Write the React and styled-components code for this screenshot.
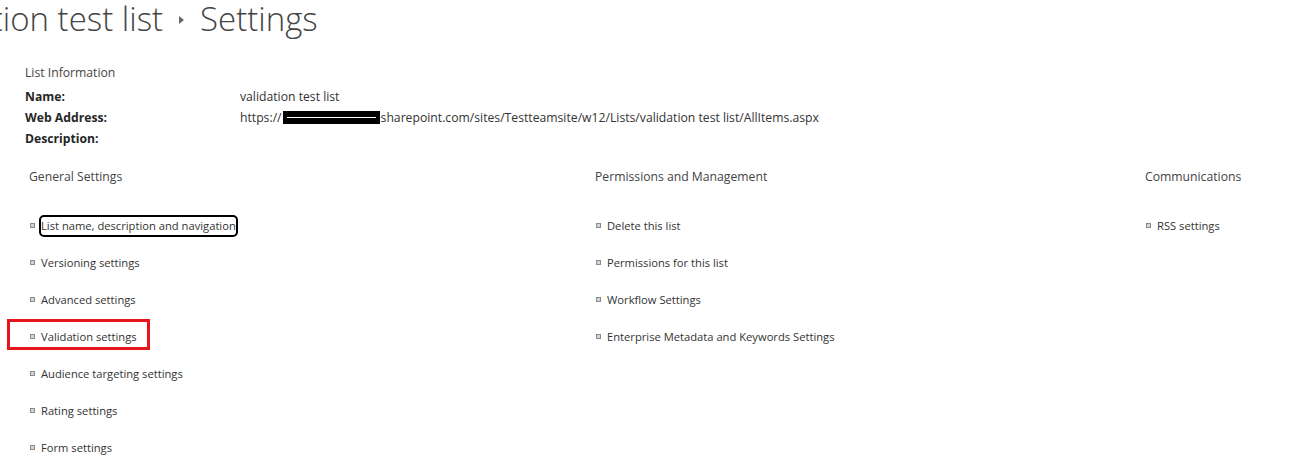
import styled, { createGlobalStyle } from "styled-components";

const GlobalStyle = createGlobalStyle`
  html, body {
    margin: 0;
    padding: 0;
    background: #fff;
    overflow: hidden;
  }
  body {
    font-family: "Open Sans", "Liberation Sans", sans-serif;
    color: #444;
  }
`;

const Page = styled.div`
  width: 1297px;
  height: 462px;
  overflow: hidden;
`;

const Title = styled.h1`
  margin: -2px 0 0 -93px;
  height: 42px;
  font-weight: 300;
  font-size: 33px;
  line-height: 38px;
  color: #444;
  white-space: nowrap;
  display: flex;
  align-items: center;
  gap: 16px;
`;

const Arrow = styled.span`
  width: 0;
  height: 0;
  border-top: 4px solid transparent;
  border-bottom: 4px solid transparent;
  border-left: 5px solid #666;
  margin-top: 2px;
`;

const Info = styled.section`
  margin: 23px 0 0 25px;
  font-size: 12.2px;
`;

const InfoHeading = styled.div`
  line-height: 20px;
  color: #444;
  margin-bottom: 3px;
`;

const InfoRow = styled.div`
  display: grid;
  grid-template-columns: 215px auto;
  line-height: 21px;
  color: #333;
`;

const Label = styled.span`
  font-weight: 700;
  color: #262626;
`;

const Redacted = styled.span`
  display: inline-block;
  vertical-align: middle;
  width: 97px;
  height: 13px;
  margin: -2px 1px 0 1px;
  background: #000;
  position: relative;
  &::after {
    content: "";
    position: absolute;
    left: 4px;
    right: 4px;
    top: 6px;
    height: 1px;
    background: #fff;
  }
`;

const Columns = styled.div`
  display: grid;
  grid-template-columns: 566px 550px auto;
  margin: 18px 0 0 29px;
  font-size: 12.2px;
`;

const Column = styled.div``;

const ColumnHeading = styled.div`
  line-height: 20px;
  color: #444;
  margin-bottom: 20px;
`;

const Item = styled.div`
  position: relative;
  height: 37px;
  display: flex;
  align-items: center;
  gap: 6px;
  font-size: 11.2px;
  color: #333;
`;

const Bullet = styled.span`
  width: 5px;
  height: 5px;
  margin-left: 1px;
  box-sizing: border-box;
  border: 1px solid #8a8a8a;
  background: #d4d4d4;
  flex: none;
`;

const Link = styled.span`
  border-radius: 3px;
  outline: ${(p) => (p.$focused ? "2px solid #000" : "none")};
  line-height: 18px;
`;

const Highlight = styled.span`
  position: absolute;
  left: -22px;
  top: 1px;
  width: 143px;
  height: 31px;
  box-sizing: border-box;
  border: 3px solid #e8141c;
  pointer-events: none;
`;

const columns = [
  {
    title: "General Settings",
    items: [
      "List name, description and navigation",
      "Versioning settings",
      "Advanced settings",
      "Validation settings",
      "Audience targeting settings",
      "Rating settings",
      "Form settings",
    ],
  },
  {
    title: "Permissions and Management",
    items: [
      "Delete this list",
      "Permissions for this list",
      "Workflow Settings",
      "Enterprise Metadata and Keywords Settings",
    ],
  },
  {
    title: "Communications",
    items: ["RSS settings"],
  },
];

export default function App() {
  return (
    <Page>
      <GlobalStyle />
      <Title>
        validation test list
        <Arrow />
        Settings
      </Title>
      <Info>
        <InfoHeading>List Information</InfoHeading>
        <InfoRow>
          <Label>Name:</Label>
          <span>validation test list</span>
        </InfoRow>
        <InfoRow>
          <Label>Web Address:</Label>
          <span>
            https://
            <Redacted />
            sharepoint.com/sites/Testteamsite/w12/Lists/validation test list/AllItems.aspx
          </span>
        </InfoRow>
        <InfoRow>
          <Label>Description:</Label>
          <span />
        </InfoRow>
      </Info>
      <Columns>
        {columns.map((col) => (
          <Column key={col.title}>
            <ColumnHeading>{col.title}</ColumnHeading>
            {col.items.map((item, i) => (
              <Item key={item}>
                <Bullet />
                <Link $focused={col.title === "General Settings" && i === 0}>
                  {item}
                </Link>
                {item === "Validation settings" && <Highlight />}
              </Item>
            ))}
          </Column>
        ))}
      </Columns>
    </Page>
  );
}
